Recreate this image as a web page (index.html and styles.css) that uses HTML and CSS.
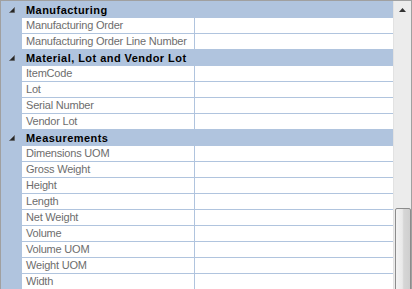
FILE: index.html
```html
<!DOCTYPE html>
<html lang="en">
<head>
    <meta charset="UTF-8">
    <meta name="viewport" content="width=device-width, initial-scale=1.0">
    <title>Properties</title>
    <link rel="stylesheet" href="styles.css">
</head>
<body>
    <div class="grid-frame">
        <div class="grid">
            <div class="row cat">
                <div class="margin"><svg class="glyph" width="6" height="6" viewBox="0 0 6 6"><polygon points="5.5,0.5 5.5,5.5 0.5,5.5"/></svg></div>
                <div class="label">Manufacturing</div>
            </div>
            <div class="row"><div class="margin"></div><div class="name">Manufacturing Order</div><div class="value"></div></div>
            <div class="row"><div class="margin"></div><div class="name">Manufacturing Order Line Number</div><div class="value"></div></div>

            <div class="row cat">
                <div class="margin"><svg class="glyph" width="6" height="6" viewBox="0 0 6 6"><polygon points="5.5,0.5 5.5,5.5 0.5,5.5"/></svg></div>
                <div class="label">Material, Lot and Vendor Lot</div>
            </div>
            <div class="row"><div class="margin"></div><div class="name">ItemCode</div><div class="value"></div></div>
            <div class="row"><div class="margin"></div><div class="name">Lot</div><div class="value"></div></div>
            <div class="row"><div class="margin"></div><div class="name">Serial Number</div><div class="value"></div></div>
            <div class="row"><div class="margin"></div><div class="name">Vendor Lot</div><div class="value"></div></div>

            <div class="row cat">
                <div class="margin"><svg class="glyph" width="6" height="6" viewBox="0 0 6 6"><polygon points="5.5,0.5 5.5,5.5 0.5,5.5"/></svg></div>
                <div class="label">Measurements</div>
            </div>
            <div class="row"><div class="margin"></div><div class="name">Dimensions UOM</div><div class="value"></div></div>
            <div class="row"><div class="margin"></div><div class="name">Gross Weight</div><div class="value"></div></div>
            <div class="row"><div class="margin"></div><div class="name">Height</div><div class="value"></div></div>
            <div class="row"><div class="margin"></div><div class="name">Length</div><div class="value"></div></div>
            <div class="row"><div class="margin"></div><div class="name">Net Weight</div><div class="value"></div></div>
            <div class="row"><div class="margin"></div><div class="name">Volume</div><div class="value"></div></div>
            <div class="row"><div class="margin"></div><div class="name">Volume UOM</div><div class="value"></div></div>
            <div class="row"><div class="margin"></div><div class="name">Weight UOM</div><div class="value"></div></div>
            <div class="row"><div class="margin"></div><div class="name">Width</div><div class="value"></div></div>
        </div>

        <div class="scrollbar">
            <div class="arrow-up"><svg width="7" height="4" viewBox="0 0 7 4"><polygon points="3.5,0 7,4 0,4"/></svg></div>
            <div class="track">
                <div class="thumb"></div>
            </div>
        </div>
    </div>
</body>
</html>
```

FILE: styles.css
```css
body {
    margin: 0;
    width: 412px;
    height: 289px;
    overflow: hidden;
    font-family: "Liberation Sans", Arial, sans-serif;
    font-size: 11px;
    background: #ffffff;
}
.grid-frame {
    display: flex;
    height: 289px;
    border-top: 1px solid #a0a0a0;
    border-left: 1px solid #a0a0a0;
    border-right: 1px solid #a0a0a0;
    box-sizing: border-box;
    overflow: hidden;
}
.grid {
    width: 393px;
    display: flex;
    flex-direction: column;
    background: #b0c4de;
    padding-top: 1px;
}
.row {
    display: flex;
    height: 16px;
    flex-shrink: 0;
}
.margin {
    width: 21px;
    flex-shrink: 0;
    display: flex;
    align-items: center;
    padding-left: 8px;
    box-sizing: border-box;
}
.glyph {
    fill: #262626;
    stroke: #595959;
    stroke-width: 0.6;
}
.name {
    width: 173px;
    padding-left: 4px;
    box-sizing: border-box;
    background: #ffffff;
    border-bottom: 1px solid #b0c4de;
    border-right: 1px solid #b0c4de;
    color: #6d6d6d;
    line-height: 15px;
    letter-spacing: -0.2px;
    white-space: nowrap;
    overflow: hidden;
}
.value {
    flex: 1;
    background: #ffffff;
    border-bottom: 1px solid #b0c4de;
}
.cat .label {
    flex: 1;
    padding-left: 4px;
    font-weight: bold;
    color: #000000;
    line-height: 16px;
    letter-spacing: 0.45px;
}
.scrollbar {
    width: 17px;
    flex-shrink: 0;
    display: flex;
    flex-direction: column;
    background: #ececec;
    border-left: 1px solid #e2e2e2;
    overflow: hidden;
}
.arrow-up {
    height: 17px;
    flex-shrink: 0;
    display: flex;
    justify-content: center;
    align-items: center;
    fill: #333333;
}
.track {
    flex-shrink: 0;
    padding-top: 190px;
    padding-left: 1px;
}
.thumb {
    width: 14px;
    height: 120px;
    border: 1px solid #8c8c8c;
    border-radius: 2px;
    background: linear-gradient(to right, #f3f3f3 0%, #e9e9e9 45%, #d6d6d6 55%, #cfcfcf 100%);
}
```
